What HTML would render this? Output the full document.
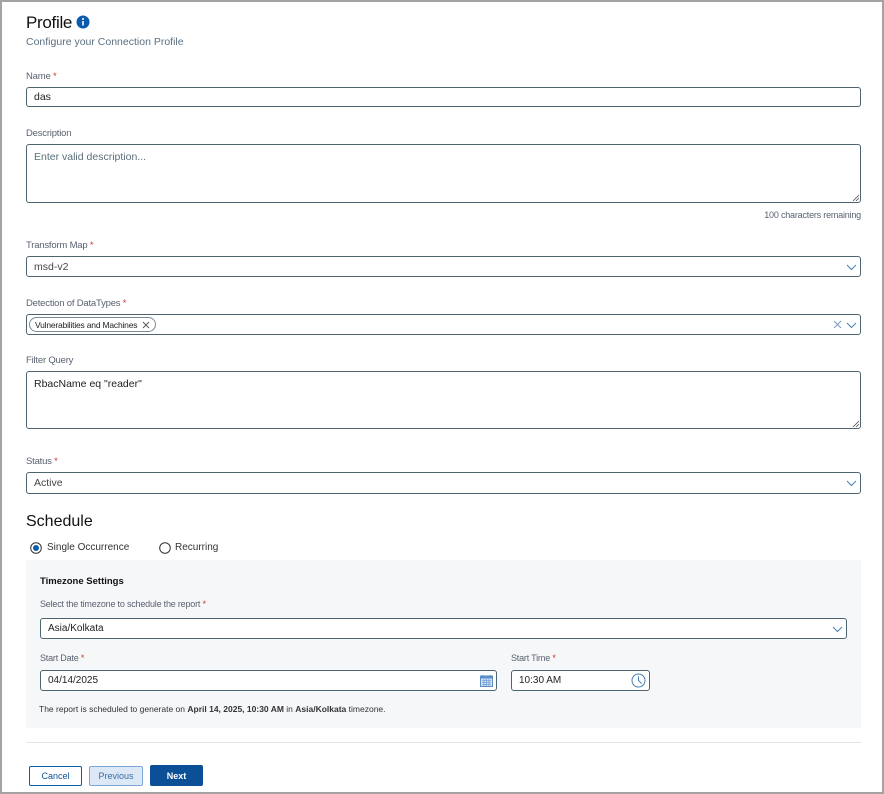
<!DOCTYPE html>
<html><head><meta charset="utf-8"><style>
*{box-sizing:border-box;margin:0;padding:0}
html,body{width:884px;height:794px;overflow:hidden;background:#fff}
body{font-family:"Liberation Sans",Arial,sans-serif;color:#222;position:relative}
.frame{position:absolute;left:0;top:0;width:884px;height:794px;border:2px solid #a3a3a3}
.a{position:absolute;white-space:nowrap}
.lbl{font-size:9.5px;color:#5a6270;letter-spacing:-0.2px}
.req{color:#d0332f}
.box{position:absolute;border:1px solid #4e6470;border-radius:3px;background:#fff;font-size:10.5px;color:#222;padding-left:7px;display:flex;align-items:center}
.ta{align-items:flex-start;padding-top:6px}
.chev{position:absolute;right:3px;top:50%;margin-top:-5px}
.grip{position:absolute;right:1px;bottom:1px}
.btn{position:absolute;height:20px;font-size:9px;display:flex;align-items:center;justify-content:center;border-radius:2px}
</style></head><body>
<div class="frame"></div>

<div class="a" style="left:26px;top:13px;font-size:17px;color:#111;letter-spacing:-0.3px">Profile</div>
<svg class="a" style="left:76px;top:15px" width="14" height="14" viewBox="0 0 14 14"><circle cx="7" cy="7" r="6.5" fill="#0b5cad"/><rect x="6.2" y="6" width="1.6" height="4.5" fill="#fff"/><circle cx="7" cy="4" r="1" fill="#fff"/></svg>
<div class="a" style="left:26px;top:36px;font-size:10.5px;color:#5a7080">Configure your Connection Profile</div>

<div class="a lbl" style="left:26px;top:71px">Name <span class="req">*</span></div>
<div class="box" style="left:26px;top:87px;width:835px;height:20px">das</div>

<div class="a lbl" style="left:26px;top:128px">Description</div>
<div class="box ta" style="left:26px;top:144px;width:835px;height:59px;color:#5a6f7a">Enter valid description...<svg class="grip" width="7" height="7"><path d="M1 7L7 1M4 7L7 4" stroke="#555" stroke-width="0.8"/></svg></div>
<div class="a lbl" style="right:23px;top:210px;font-size:9px">100 characters remaining</div>

<div class="a lbl" style="left:26px;top:240px">Transform Map <span class="req">*</span></div>
<div class="box" style="left:26px;top:256px;width:835px;height:21px;color:#444">msd-v2<svg class="chev" width="11" height="10"><path d="M1 3l4.5 4.5L10 3" fill="none" stroke="#4a7fb5" stroke-width="1"/></svg></div>

<div class="a lbl" style="left:26px;top:298px">Detection of DataTypes <span class="req">*</span></div>
<div class="box" style="left:26px;top:314px;width:835px;height:21px;padding-left:2px">
<div style="border:1px solid #7a8a94;border-radius:8px;height:15px;padding:0 5px;font-size:8.5px;letter-spacing:-0.2px;display:flex;align-items:center;color:#222">Vulnerabilities and Machines<svg style="margin-left:5px" width="8" height="8"><path d="M1 1l6 6M7 1l-6 6" stroke="#555" stroke-width="0.9"/></svg></div>
<svg class="a" style="right:18px;top:5px" width="9" height="9"><path d="M1 1l7 7M8 1l-7 7" stroke="#7a9bc0" stroke-width="1"/></svg>
<svg class="chev" width="11" height="10"><path d="M1 3l4.5 4.5L10 3" fill="none" stroke="#4a7fb5" stroke-width="1"/></svg></div>

<div class="a lbl" style="left:26px;top:355px">Filter Query</div>
<div class="box ta" style="left:26px;top:371px;width:835px;height:58px">RbacName eq "reader"<svg class="grip" width="7" height="7"><path d="M1 7L7 1M4 7L7 4" stroke="#555" stroke-width="0.8"/></svg></div>

<div class="a lbl" style="left:26px;top:456px">Status <span class="req">*</span></div>
<div class="box" style="left:26px;top:472px;width:835px;height:22px;color:#444">Active<svg class="chev" width="11" height="10"><path d="M1 3l4.5 4.5L10 3" fill="none" stroke="#4a7fb5" stroke-width="1"/></svg></div>

<div class="a" style="left:26px;top:513px;font-size:16px;color:#111">Schedule</div>
<svg class="a" style="left:30px;top:542px" width="12" height="12"><circle cx="6" cy="6" r="5.3" fill="#fff" stroke="#333" stroke-width="1"/><circle cx="6" cy="6" r="3" fill="#0b5cad"/></svg>
<div class="a" style="left:47px;top:542px;font-size:10px;color:#333">Single Occurrence</div>
<svg class="a" style="left:159px;top:542px" width="12" height="12"><circle cx="6" cy="6" r="5.3" fill="#fff" stroke="#333" stroke-width="1"/></svg>
<div class="a" style="left:175px;top:542px;font-size:10px;color:#333">Recurring</div>

<div class="a" style="left:26px;top:560px;width:835px;height:168px;background:#f6f7f9"></div>
<div class="a" style="left:40px;top:576px;font-size:9.5px;font-weight:bold;color:#111">Timezone Settings</div>
<div class="a lbl" style="left:40px;top:599px;font-size:9px">Select the timezone to schedule the report <span class="req">*</span></div>
<div class="box" style="left:40px;top:618px;width:807px;height:21px;font-size:10px">Asia/Kolkata<svg class="chev" width="11" height="10"><path d="M1 3l4.5 4.5L10 3" fill="none" stroke="#4a7fb5" stroke-width="1"/></svg></div>

<div class="a lbl" style="left:40px;top:653px;font-size:9px">Start Date <span class="req">*</span></div>
<div class="box" style="left:40px;top:670px;width:457px;height:21px;font-size:10px">04/14/2025
<svg class="a" style="right:3px;top:3px" width="13" height="13"><rect x="0.5" y="2" width="12" height="10.5" fill="#cfe0f2" stroke="#5a8ec8"/><rect x="0.5" y="2" width="12" height="2.5" fill="#5a8ec8"/><path d="M3 1v2M10 1v2" stroke="#5a8ec8"/><path d="M2 6.5h9M2 8.5h9M2 10.5h9M4 5v7M6.5 5v7M9 5v7" stroke="#5a8ec8" stroke-width="0.6"/></svg></div>
<div class="a lbl" style="left:511px;top:653px;font-size:9px">Start Time <span class="req">*</span></div>
<div class="box" style="left:511px;top:670px;width:139px;height:21px;font-size:10px">10:30 AM
<svg class="a" style="right:3px;top:2px" width="15" height="15"><circle cx="7.5" cy="7.5" r="6.5" fill="none" stroke="#4a7fb5" stroke-width="1"/><path d="M7.5 3.5v4l3 3" fill="none" stroke="#4a7fb5" stroke-width="1"/></svg></div>

<div class="a" style="left:39px;top:704px;font-size:8.5px;color:#333">The report is scheduled to generate on <b>April 14, 2025, 10:30 AM</b> in <b>Asia/Kolkata</b> timezone.</div>

<div class="a" style="left:26px;top:742px;width:835px;height:1px;background:#e2e6e8"></div>

<div class="btn" style="left:29px;top:766px;width:53px;border:1px solid #0b5cad;color:#0b4f96;background:#fff">Cancel</div>
<div class="btn" style="left:89px;top:766px;width:54px;border:1px solid #79a8d8;color:#3a6fa8;background:#dce8f5">Previous</div>
<div class="btn" style="left:150px;top:765px;width:53px;height:21px;background:#0b4f96;color:#fff;font-weight:bold">Next</div>
</body></html>
